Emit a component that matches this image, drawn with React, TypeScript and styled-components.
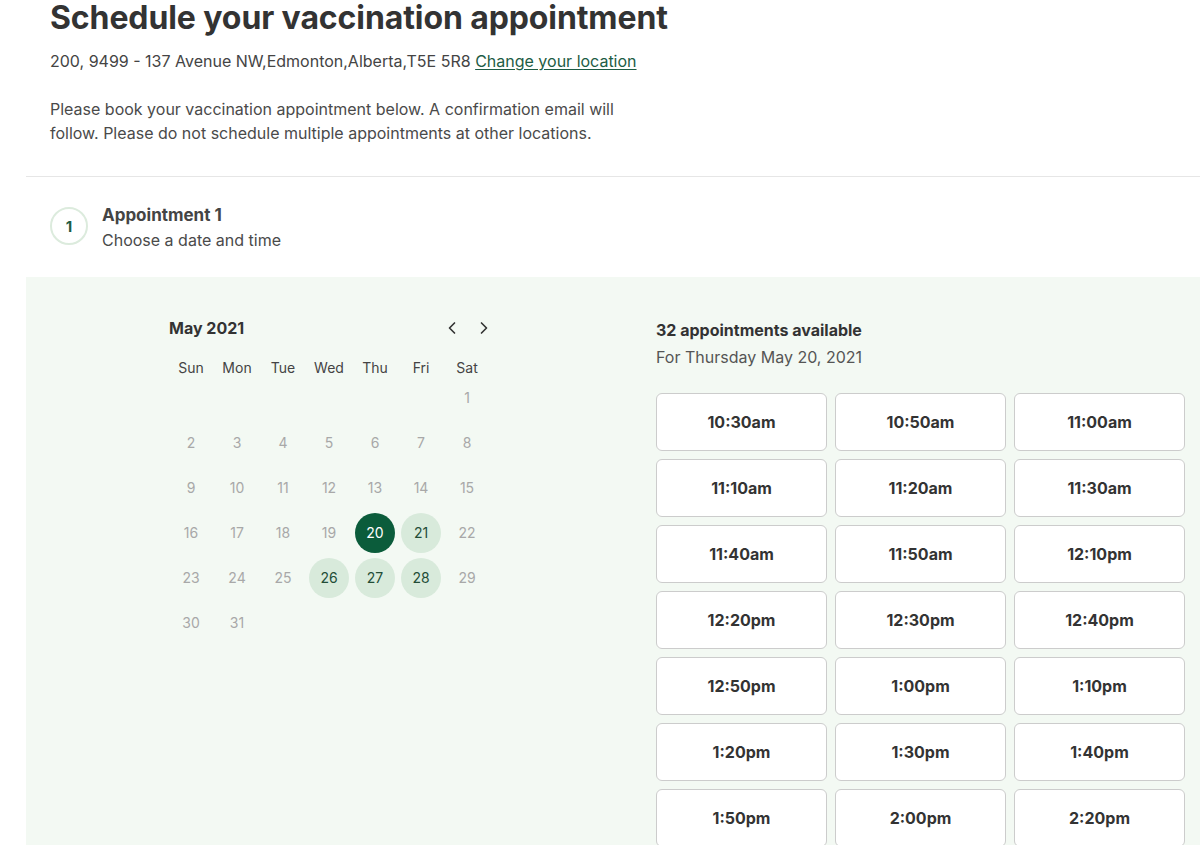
import React from 'react';
import styled, {createGlobalStyle} from 'styled-components';
import {ChevronLeft, ChevronRight} from 'lucide-react';

const GlobalStyle = createGlobalStyle`
    html, body {
        margin: 0;
        padding: 0;
        background: #ffffff;
        overflow: hidden;
    }

    body {
        font-family: Inter, "Noto Sans", "Liberation Sans", sans-serif;
        color: #333333;
        -webkit-font-smoothing: antialiased;
    }
`;

const Page = styled.main`
    margin-left: 26px;
`;

const Intro = styled.header`
    padding: 0 24px 31px;
    border-bottom: 1px solid #e6e6e6;
`;

const Title = styled.h1`
    margin: 0;
    font-size: 32px;
    line-height: 36px;
    font-weight: 700;
    color: #333333;
    letter-spacing: -0.1px;
`;

const Address = styled.p`
    margin: 14px 0 0;
    font-size: 16px;
    line-height: 22px;
    color: #444444;
`;

const Link = styled.a`
    color: #1d5c45;
    text-decoration: underline;
    text-underline-offset: 2px;
`;

const Lead = styled.p`
    margin: 25px 0 0;
    max-width: 580px;
    font-size: 16px;
    line-height: 24px;
    color: #4a4a4a;
`;

const Step = styled.div`
    display: flex;
    align-items: flex-start;
    gap: 14px;
    padding: 25px 24px 25px;
`;

const StepBadge = styled.div`
    margin-top: 5px;
    width: 38px;
    height: 38px;
    box-sizing: border-box;
    border: 2px solid #dcebdd;
    border-radius: 50%;
    display: flex;
    align-items: center;
    justify-content: center;
    font-size: 15px;
    font-weight: 700;
    color: #1d5c45;
`;

const StepText = styled.div`
    display: flex;
    flex-direction: column;
`;

const StepTitle = styled.span`
    font-size: 17px;
    line-height: 26px;
    font-weight: 700;
    color: #444444;
`;

const StepSub = styled.span`
    font-size: 16px;
    line-height: 24px;
    color: #4a4a4a;
`;

const Panel = styled.section`
    background: #f3f9f3;
    display: flex;
    align-items: flex-start;
    gap: 166px;
    padding: 39px 15px 0 142px;
`;

const Calendar = styled.div`
    width: 322px;
`;

const CalHeader = styled.div`
    display: flex;
    align-items: center;
    justify-content: space-between;
    height: 24px;
    padding-left: 1px;
    margin-bottom: 19px;
`;

const Month = styled.span`
    font-size: 16px;
    font-weight: 700;
    color: #333333;
`;

const Nav = styled.div`
    display: flex;
    gap: 12px;
    margin-right: -4px;
`;

const NavButton = styled.button`
    border: 0;
    background: none;
    padding: 0;
    width: 20px;
    height: 24px;
    display: flex;
    align-items: center;
    justify-content: center;
    color: #333333;
    cursor: pointer;
`;

const Weekdays = styled.div`
    display: grid;
    grid-template-columns: repeat(7, 46px);
    height: 16px;
    align-items: center;
`;

const Weekday = styled.span`
    text-align: center;
    font-size: 14px;
    color: #444444;
`;

const Days = styled.div`
    display: grid;
    grid-template-columns: repeat(7, 46px);
    grid-auto-rows: 45px;
`;

type DayState = 'off' | 'open' | 'selected';

const Day = styled.span<{$state: DayState}>`
    justify-self: center;
    align-self: center;
    width: 40px;
    height: 40px;
    border-radius: 50%;
    display: flex;
    align-items: center;
    justify-content: center;
    font-size: 14px;
    background: ${({$state}) =>
        $state === 'selected' ? '#0b5c3b' : $state === 'open' ? '#d8eadb' : 'transparent'};
    color: ${({$state}) =>
        $state === 'selected' ? '#ffffff' : $state === 'open' ? '#234d37' : '#a8a8a8'};
`;

const Slots = styled.div`
    flex: 1;
`;

const Count = styled.div`
    font-size: 16px;
    line-height: 20px;
    font-weight: 700;
    color: #333333;
    margin-top: 4px;
`;

const ForDate = styled.div`
    margin-top: 5px;
    font-size: 16px;
    line-height: 24px;
    color: #555555;
`;

const SlotGrid = styled.div`
    margin-top: 24px;
    display: grid;
    grid-template-columns: repeat(3, 171px);
    grid-auto-rows: 58px;
    gap: 8px;
`;

const SlotButton = styled.button`
    box-sizing: border-box;
    background: #ffffff;
    border: 1px solid #cccccc;
    border-radius: 6px;
    font-family: inherit;
    font-size: 16px;
    font-weight: 700;
    color: #333333;
    cursor: pointer;
`;

const times = [
    '10:30am', '10:50am', '11:00am',
    '11:10am', '11:20am', '11:30am',
    '11:40am', '11:50am', '12:10pm',
    '12:20pm', '12:30pm', '12:40pm',
    '12:50pm', '1:00pm', '1:10pm',
    '1:20pm', '1:30pm', '1:40pm',
    '1:50pm', '2:00pm', '2:20pm'
];

const openDays = [21, 26, 27, 28];

const _getState = (day: number): DayState => {
    if (day === 20) return 'selected';
    if (openDays.includes(day)) return 'open';
    return 'off';
};

export default function App() {
    // May 2021 starts on a Saturday
    const blanks = Array.from({length: 6});
    const days = Array.from({length: 31}, (_, i) => i + 1);

    return (
        <>
            <GlobalStyle />
            <Page>
                <Intro>
                    <Title>Schedule your vaccination appointment</Title>
                    <Address>
                        200, 9499 - 137 Avenue NW,Edmonton,Alberta,T5E 5R8{' '}
                        <Link href="#">Change your location</Link>
                    </Address>
                    <Lead>
                        Please book your vaccination appointment below. A confirmation email will follow.
                        Please do not schedule multiple appointments at other locations.
                    </Lead>
                </Intro>

                <Step>
                    <StepBadge>1</StepBadge>
                    <StepText>
                        <StepTitle>Appointment 1</StepTitle>
                        <StepSub>Choose a date and time</StepSub>
                    </StepText>
                </Step>

                <Panel>
                    <Calendar>
                        <CalHeader>
                            <Month>May 2021</Month>
                            <Nav>
                                <NavButton aria-label="Previous month">
                                    <ChevronLeft size={20} strokeWidth={2} />
                                </NavButton>
                                <NavButton aria-label="Next month">
                                    <ChevronRight size={20} strokeWidth={2} />
                                </NavButton>
                            </Nav>
                        </CalHeader>
                        <Weekdays>
                            {['Sun', 'Mon', 'Tue', 'Wed', 'Thu', 'Fri', 'Sat'].map(d => (
                                <Weekday key={d}>{d}</Weekday>
                            ))}
                        </Weekdays>
                        <Days>
                            {blanks.map((_, i) => (
                                <span key={`b${i}`} />
                            ))}
                            {days.map(d => (
                                <Day key={d} $state={_getState(d)}>
                                    {d}
                                </Day>
                            ))}
                        </Days>
                    </Calendar>

                    <Slots>
                        <Count>32 appointments available</Count>
                        <ForDate>For Thursday May 20, 2021</ForDate>
                        <SlotGrid>
                            {times.map(t => (
                                <SlotButton key={t}>{t}</SlotButton>
                            ))}
                        </SlotGrid>
                    </Slots>
                </Panel>
            </Page>
        </>
    );
}
